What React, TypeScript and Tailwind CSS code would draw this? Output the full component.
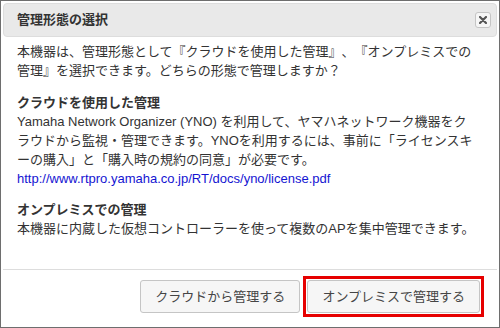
import React from "react";

const font = {
  fontFamily: '"Liberation Sans", "Noto Sans CJK JP", sans-serif',
};

const CloseIcon = () => (
  <svg width="8" height="8" viewBox="0 0 8 8">
    <path d="M1 1 L7 7 M7 1 L1 7" stroke="#555" strokeWidth="2.2" strokeLinecap="round" />
  </svg>
);

export default function App() {
  return (
    <div
      style={font}
      className="w-[500px] h-[328px] border border-[#6e6e6e] bg-white p-[2px] flex flex-col text-[13px] text-[#333] overflow-hidden [text-spacing-trim:space-all]"
    >
      {/* Title bar */}
      <div className="h-[34px] shrink-0 flex items-center justify-between pl-[13px] pr-[5px] rounded-[4px] border border-[#dddddd] bg-[#e9e9e9]">
        <span className="font-bold text-[#333]">管理形態の選択</span>
        <button
          title="閉じる"
          className="w-[16px] h-[16px] flex items-center justify-center rounded-[3px] border border-[#c5c5c5] bg-[#f6f6f6]"
        >
          <CloseIcon />
        </button>
      </div>

      {/* Body */}
      <div className="flex-1 pt-[5px] px-[14px] leading-[19px] whitespace-nowrap">
        <p className="mb-[13px]">
          本機器は、管理形態として『クラウドを使用した管理』、『オンプレミスでの
          <br />
          管理』を選択できます。どちらの形態で管理しますか？
        </p>

        <div className="mb-[12px]">
          <p className="font-bold">クラウドを使用した管理</p>
          <p>
            Yamaha Network Organizer (YNO) を利用して、ヤマハネットワーク機器をク
            <br />
            ラウドから監視・管理できます。YNOを利用するには、事前に「ライセンスキ
            <br />
            ーの購入」と「購入時の規約の同意」が必要です。
            <br />
            <a href="#" className="text-[#1414d2]">
              http://www.rtpro.yamaha.co.jp/RT/docs/yno/license.pdf
            </a>
          </p>
        </div>

        <div>
          <p className="font-bold">オンプレミスでの管理</p>
          <p>本機器に内蔵した仮想コントローラーを使って複数のAPを集中管理できます。</p>
        </div>
      </div>

      {/* Button pane */}
      <div className="shrink-0 border-t border-[#dddddd] pt-[6px] pb-[8px] pr-[13px] flex justify-end items-center gap-[3px]">
        <button className="h-[33px] px-[14px] rounded-[3px] border border-[#c5c5c5] bg-[#f6f6f6] text-[#454545] text-[13px]">
          クラウドから管理する
        </button>
        <div className="border-[3px] border-[#e60000] p-[1px]">
          <button className="h-[33px] px-[14px] rounded-[3px] border border-[#c5c5c5] bg-[#f6f6f6] text-[#454545] text-[13px]">
            オンプレミスで管理する
          </button>
        </div>
      </div>
    </div>
  );
}
